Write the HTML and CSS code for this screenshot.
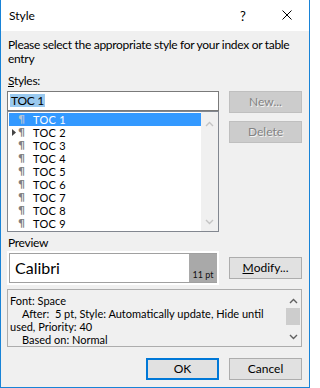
FILE: index.html
```html
<!DOCTYPE html>
<html>
<head>
<meta charset="utf-8">
<link rel="stylesheet" href="styles.css">
</head>
<body>
<div class="window">
  <div class="titlebar">
    <span class="title">Style</span>
    <span class="help">?</span>
    <svg class="close" width="10" height="10" viewBox="0 0 10 10"><path d="M0.5 0.5 L9.5 9.5 M9.5 0.5 L0.5 9.5" stroke="#000" stroke-width="1" fill="none"/></svg>
  </div>
  <div class="content">
    <div class="intro">Please select the appropriate style for your index or table entry</div>
    <div class="label styles-label"><u>S</u>tyles:</div>
    <div class="main">
      <div class="leftcol">
        <div class="input"><span class="sel">TOC 1</span></div>
        <div class="list">
          <div class="rows">
            <div class="row selected"><span class="arrow"></span><span class="pil">¶</span><span class="name">TOC 1</span></div>
            <div class="row"><span class="arrow"><svg width="4" height="7" viewBox="0 0 4 7"><path d="M0 0 L4 3.5 L0 7 Z" fill="#444"/></svg></span><span class="pil">¶</span><span class="name">TOC 2</span></div>
            <div class="row"><span class="arrow"></span><span class="pil">¶</span><span class="name">TOC 3</span></div>
            <div class="row"><span class="arrow"></span><span class="pil">¶</span><span class="name">TOC 4</span></div>
            <div class="row"><span class="arrow"></span><span class="pil">¶</span><span class="name">TOC 5</span></div>
            <div class="row"><span class="arrow"></span><span class="pil">¶</span><span class="name">TOC 6</span></div>
            <div class="row"><span class="arrow"></span><span class="pil">¶</span><span class="name">TOC 7</span></div>
            <div class="row"><span class="arrow"></span><span class="pil">¶</span><span class="name">TOC 8</span></div>
            <div class="row"><span class="arrow"></span><span class="pil">¶</span><span class="name">TOC 9</span></div>
          </div>
          <div class="vscroll">
            <svg width="9" height="6" viewBox="0 0 9 6"><path d="M1 5 L4.5 1.5 L8 5" stroke="#c4c4c4" stroke-width="1.4" fill="none"/></svg>
            <svg width="9" height="6" viewBox="0 0 9 6"><path d="M1 1 L4.5 4.5 L8 1" stroke="#c4c4c4" stroke-width="1.4" fill="none"/></svg>
          </div>
        </div>
      </div>
      <div class="rightcol">
        <div class="btn disabled">New...</div>
        <div class="btn disabled">Delete</div>
      </div>
    </div>
    <div class="label preview-label">Preview</div>
    <div class="prevrow">
      <div class="preview">
        <div class="preview-inner">
          <div class="sample">Calibri</div>
          <div class="size">11 pt</div>
        </div>
      </div>
      <div class="btn modify"><u>M</u>odify...</div>
    </div>
    <div class="desc">
      <div class="desc-text">
        <div>Font: Space</div>
        <div class="ind">After:&nbsp; 5 pt, Style: Automatically update, Hide until</div>
        <div>used, Priority: 40</div>
        <div class="ind">Based on: Normal</div>
      </div>
      <div class="dscroll">
        <svg width="9" height="6" viewBox="0 0 9 6"><path d="M1 5 L4.5 1.5 L8 5" stroke="#606060" stroke-width="1.4" fill="none"/></svg>
        <div class="thumb"></div>
        <div class="spacer"></div>
        <svg width="9" height="6" viewBox="0 0 9 6"><path d="M1 1 L4.5 4.5 L8 1" stroke="#606060" stroke-width="1.4" fill="none"/></svg>
      </div>
    </div>
    <div class="actions">
      <div class="btn ok">OK</div>
      <div class="btn">Cancel</div>
    </div>
  </div>
</div>
</body>
</html>
```
FILE: styles.css
```css
* { box-sizing: border-box; }
html, body { margin: 0; padding: 0; }
body {
  font-family: "Lato", "Noto Sans", sans-serif;
  font-size: 12px;
  letter-spacing: -0.3px;
  color: #000;
  background: #fff;
}
.window {
  width: 310px;
  height: 388px;
  border: 1px solid #1883d7;
  border-top: none;
  background: #f0f0f0;
  display: flex;
  flex-direction: column;
}
.titlebar {
  height: 31px;
  background: #fff;
  display: flex;
  align-items: center;
  position: relative;
}
.title { margin-left: 8px; font-size: 12px; letter-spacing: 0; }
.help { position: absolute; left: 239px; top: 8px; font-size: 13px; }
.close { position: absolute; left: 281px; top: 10px; }
.content {
  padding: 0 6px 0 6px;
  display: flex;
  flex-direction: column;
}
.intro {
  margin-top: 7px;
  line-height: 14px;
  padding-left: 1px;
}
.label { line-height: 14px; padding-left: 1px; }
.styles-label { margin-top: 8px; }
.main {
  margin-top: 3px;
  display: flex;
  gap: 10px;
}
.leftcol { width: 212px; display: flex; flex-direction: column; }
.input {
  height: 20px;
  border: 1px solid #7a7a7a;
  background: #fff;
  padding: 2px 2px;
  line-height: 14px;
}
.sel { background: #99c9ef; padding: 0 1px; display: inline-block; line-height: 13px; }
.list {
  height: 121px;
  border: 1px solid #828790;
  background: #fff;
  display: flex;
}
.rows { flex: 1; padding: 1px 0 0 1px; }
.row {
  height: 13px;
  display: flex;
  align-items: center;
  line-height: 11px;
  font-size: 11px;
  letter-spacing: 0.3px;
}
.row.selected { background: #3399ff; color: #fff; }
.arrow { width: 9px; display: flex; align-items: center; justify-content: center; }
.pil { width: 14px; color: #7f7f7f; font-size: 11px; line-height: 11px; font-weight: bold; font-family: "DejaVu Sans", sans-serif; }
.row.selected .pil { color: #b8c4d2; }
.name { margin-left: 1px; }
.vscroll {
  width: 17px;
  background: #f0f0f0;
  display: flex;
  flex-direction: column;
  justify-content: space-between;
  align-items: center;
  padding: 9px 0 6px;
}
.rightcol { width: 73px; display: flex; flex-direction: column; gap: 8px; }
.btn {
  height: 22px;
  border: 1px solid #adadad;
  background: #e1e1e1;
  display: flex;
  align-items: center;
  justify-content: center;
  line-height: 14px;
  letter-spacing: 0;
}
.btn.disabled {
  background: #cccccc;
  border-color: #bfbfbf;
  color: #838383;
  text-shadow: 1px 1px 0 #f4f4f4;
}
.preview-label { margin-top: 4px; }
.prevrow { display: flex; gap: 10px; margin-top: 1px; align-items: flex-start; }
.preview { width: 212px; height: 34px; background: #fff; padding: 2px; }
.preview-inner {
  height: 30px;
  border: 1px solid #a0a0a0;
  border-right: none;
  display: flex;
}
.sample {
  flex: 1;
  font-family: "Lato", "Open Sans", sans-serif;
  font-size: 16px;
  letter-spacing: 0;
  padding-left: 5px;
  line-height: 27px;
}
.size {
  width: 28px;
  background: #a9a9a9;
  font-size: 9px;
  letter-spacing: 0;
  display: flex;
  align-items: flex-end;
  justify-content: center;
  padding-bottom: 2px;
  color: #111;
}
.modify { width: 73px; margin-top: 6px; }
.desc {
  margin-top: 4px;
  height: 58px;
  width: 295px;
  border: 1px solid #adadad;
  display: flex;
}
.desc-text {
  flex: 1;
  padding: 4px 0 0 2px;
  font-size: 11px;
  letter-spacing: 0;
  line-height: 13px;
  white-space: nowrap;
  overflow: hidden;
}
.ind { padding-left: 12px; }
.dscroll {
  width: 16px;
  display: flex;
  flex-direction: column;
  align-items: center;
  padding: 8px 0 6px;
}
.thumb { width: 14px; height: 17px; background: #cdcdcd; margin-top: 4px; }
.spacer { flex: 1; }
.actions {
  margin-top: 11px;
  display: flex;
  justify-content: flex-end;
  gap: 10px;
  padding-right: 1px;
}
.actions .btn { width: 73px; }
.btn.ok { border: 2px solid #0078d7; }
```
